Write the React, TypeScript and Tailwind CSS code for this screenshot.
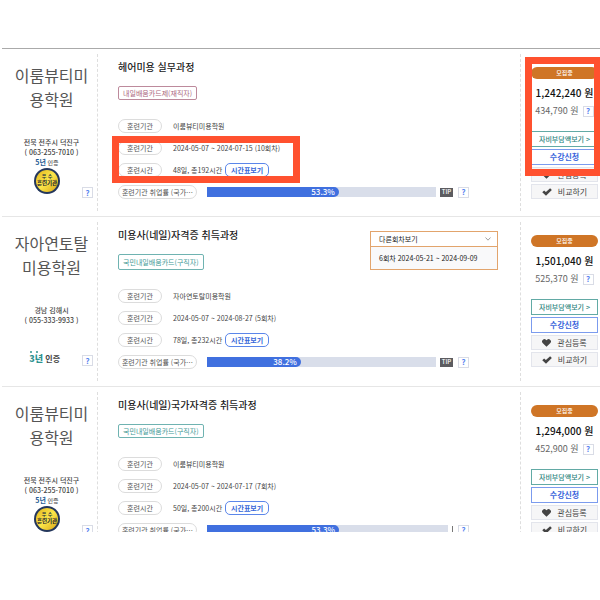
import React from "react";

type Course = {
  school: [string, string];
  region: string;
  phone: string;
  certYears: number;
  excellent: boolean;
  title: string;
  tag: string;
  tagClass: string;
  institute: string;
  period: string;
  hours: string;
  rate: string;
  fill: number;
  tip: boolean;
  price: string;
  selfPay: string;
  otherSession?: string;
  highlighted?: boolean;
};

const TEAL_TAG = "border-[#6fb3b1] text-[#3f9996]";

const courses: Course[] = [
  {
    school: ["이룸뷰티미", "용학원"],
    region: "전북 전주시 덕진구",
    phone: "( 063-255-7010 )",
    certYears: 5,
    excellent: true,
    title: "헤어미용 실무과정",
    tag: "내일배움카드제(재직자)",
    tagClass: "h-[14px] border-[#bd8a9c] text-[#ab6880]",
    institute: "이룸뷰티미용학원",
    period: "2024-05-07 ~ 2024-07-15 (10회차)",
    hours: "48일, 총192시간",
    rate: "53.3%",
    fill: 57.6,
    tip: true,
    price: "1,242,240 원",
    selfPay: "434,790 원",
    highlighted: true,
  },
  {
    school: ["자아연토탈", "미용학원"],
    region: "경남 김해시",
    phone: "( 055-333-9933 )",
    certYears: 3,
    excellent: false,
    title: "미용사(네일)자격증 취득과정",
    tag: "국민내일배움카드(구직자)",
    tagClass: `h-[16px] ${TEAL_TAG}`,
    institute: "자아연토탈미용학원",
    period: "2024-05-07 ~ 2024-08-27 (5회차)",
    hours: "78일, 총232시간",
    rate: "38.2%",
    fill: 41,
    tip: true,
    price: "1,501,040 원",
    selfPay: "525,370 원",
    otherSession: "6회차 2024-05-21 ~ 2024-09-09",
  },
  {
    school: ["이룸뷰티미", "용학원"],
    region: "전북 전주시 덕진구",
    phone: "( 063-255-7010 )",
    certYears: 5,
    excellent: true,
    title: "미용사(네일)국가자격증 취득과정",
    tag: "국민내일배움카드(구직자)",
    tagClass: `h-[14px] ${TEAL_TAG}`,
    institute: "이룸뷰티미용학원",
    period: "2024-05-07 ~ 2024-07-17 (7회차)",
    hours: "50일, 총200시간",
    rate: "53.3%",
    fill: 54.8,
    tip: false,
    price: "1,294,000 원",
    selfPay: "452,900 원",
  },
];

function Help() {
  return (
    <button
      type="button"
      aria-label="도움말"
      className="flex h-[11px] w-[11px] shrink-0 items-center justify-center border border-[#d9dce6] bg-white text-[8px] leading-none font-bold text-[#5b86f0]"
    >
      ?
    </button>
  );
}

function ExcellentSeal() {
  return (
    <svg viewBox="0 0 26 26" className="h-[26px] w-[26px]">
      <defs>
        <linearGradient id="gold" x1="0" y1="0" x2="1" y2="1">
          <stop offset="0" stopColor="#e3b51c" />
          <stop offset="0.5" stopColor="#fbe64a" />
          <stop offset="1" stopColor="#d9a514" />
        </linearGradient>
      </defs>
      <circle cx="13" cy="13" r="13" fill="#24375c" />
      <circle cx="13" cy="13" r="11" fill="url(#gold)" />
      <text x="13" y="10" textAnchor="middle" fontSize="5" fontWeight="700" fill="#24303f">우 수</text>
      <text x="13" y="17" textAnchor="middle" fontSize="5.5" fontWeight="700" fill="#16202e">훈련기관</text>
    </svg>
  );
}

function Cert({ years, excellent }: { years: number; excellent: boolean }) {
  if (excellent) {
    return (
      <div className="flex flex-col items-center pb-1">
        <p className="text-[6px] leading-[11px] font-medium text-[#555]">
          <b className="text-[7px] text-[#1f5c94]">{years}년</b> 인증
        </p>
        <ExcellentSeal />
      </div>
    );
  }
  return (
    <div className="flex flex-col items-start pb-px">
      <span className="ml-px flex gap-1">
        <i className="h-0.5 w-0.5 rounded-full bg-[#2f9390]" />
        <i className="h-0.5 w-0.5 rounded-full bg-[#2f9390]" />
      </span>
      <p className="text-[8px] leading-[12px] font-bold text-[#444]">
        <b className="text-[9px] text-[#2f9390]">{years}년</b> 인증
      </p>
    </div>
  );
}

function Pill({ children, wide }: { children: React.ReactNode; wide?: boolean }) {
  return (
    <span
      className={`flex h-[14px] shrink-0 items-center justify-center rounded-full border border-[#dcdcdc] text-[7px] leading-none whitespace-nowrap text-[#555] ${wide ? "w-[79px]" : "w-[44px]"}`}
    >
      {children}
    </span>
  );
}

function Info({ label, children }: { label: string; children: React.ReactNode }) {
  return (
    <div className="flex h-[14px] items-center">
      <dt>
        <Pill>{label}</Pill>
      </dt>
      <dd className="ml-[11px] flex items-center gap-[3px] text-[7px] leading-none whitespace-nowrap text-[#444]">
        {children}
      </dd>
    </div>
  );
}

function OtherSessions({ session }: { session: string }) {
  return (
    <div className="mt-1 mr-[22px] w-32 shrink-0 border border-[#e2a46c] text-[7px] leading-none text-[#222]">
      <button
        type="button"
        aria-expanded="true"
        className="flex h-[15px] w-full items-center justify-between border-b border-[#e2a46c] bg-white pr-1.5 pl-2"
      >
        다른회차보기
        <svg viewBox="0 0 6 4" className="h-1 w-1.5" fill="none" stroke="#888" strokeWidth="0.8">
          <path d="M0.5 0.5 3 3.2 5.5 0.5" />
        </svg>
      </button>
      <ul className="h-[22px] bg-[#f9f9fa]">
        <li className="flex h-full items-center pl-2">{session}</li>
      </ul>
    </div>
  );
}

function Heart() {
  return (
    <svg viewBox="0 0 20 18" className="h-2 w-[9px]" fill="#444">
      <path d="M10 17.5 1.8 9.6A5.2 5.2 0 0 1 1.6 2 5.4 5.4 0 0 1 9.2 2L10 2.9 10.8 2a5.4 5.4 0 0 1 7.6 0 5.2 5.2 0 0 1-.2 7.600Z" />
    </svg>
  );
}

function Check() {
  return (
    <svg viewBox="0 0 20 16" className="h-2 w-[10px]" fill="#444">
      <path d="M0.5 8.5 4.2 4.800l3.600 3.400L16.200 0.300l3.500 3.500L8 15.700Z" />
    </svg>
  );
}

const smallAction =
  "flex h-[15px] items-center justify-center gap-1.5 border border-[#e3e5ec] bg-[#f6f6f7] text-[8px] leading-none text-[#444]";

function CourseRow({ c }: { c: Course }) {
  return (
    <article className="relative flex border-b border-[#e6e6e6] py-[5px]">
      <section className="w-24 shrink-0 border-r border-dashed border-[#dedede] pl-1 text-center">
        <h3 className="pt-[9px] text-[16px] leading-6 text-[#555]">
          {c.school[0]}
          <br />
          {c.school[1]}
        </h3>
        <p className="mt-[26px] text-[7px] leading-[10px] font-medium text-[#444]">
          {c.region}
          <br />
          {c.phone}
        </p>
        <div className="flex h-[41px] items-end justify-end gap-[22px] pr-1">
          <Cert years={c.certYears} excellent={c.excellent} />
          <Help />
        </div>
      </section>

      <section className="min-w-0 flex-1 pt-[5px] pb-3 pl-5">
        <div className="flex items-start justify-between">
          <div>
            <h2 className="text-[10px] leading-4 font-medium whitespace-nowrap text-[#222]">{c.title}</h2>
            <span
              className={`mt-[11px] flex w-fit items-center rounded-[2px] border px-1 text-[7px] leading-none whitespace-nowrap ${c.tagClass}`}
            >
              {c.tag}
            </span>
          </div>
          {c.otherSession && <OtherSessions session={c.otherSession} />}
        </div>
        <dl className="mt-[19px] flex flex-col gap-2">
          <Info label="훈련기관">{c.institute}</Info>
          <Info label="훈련기간">{c.period}</Info>
          <Info label="훈련시간">
            {c.hours}
            <button
              type="button"
              className="h-[14px] w-11 rounded-[5px] border border-[#5b86ea] bg-white text-[7px] leading-none font-bold text-[#3566d8]"
            >
              시간표보기
            </button>
          </Info>
          <div className="flex h-[14px] items-center pr-[51px]">
            <dt>
              <Pill wide>훈련기관 취업률 (국가…</Pill>
            </dt>
            <dd className="ml-[10px] flex min-w-0 flex-1 items-center">
              <div className="h-[10px] flex-1 bg-[#d9deea]">
                <div
                  className="flex h-full items-center justify-end rounded-r-full bg-[#4070df] pr-1 text-[8px] leading-none font-medium text-white"
                  style={{ width: `${c.fill}%` }}
                >
                  {c.rate}
                </div>
              </div>
              {c.tip ? (
                <span className="mr-[5px] ml-1 flex h-[9px] w-[13px] items-center justify-center bg-[#5c5c60] text-[6px] leading-none font-medium text-white">
                  TIP
                </span>
              ) : (
                <span className="mr-[5px] ml-1 h-[9px] w-px bg-[#777]" />
              )}
              <Help />
            </dd>
          </div>
        </dl>
      </section>

      <section className="w-20 shrink-0 border-l border-dashed border-[#dedede] pt-[13px] pr-0.5 pl-[10px]">
        <p className="flex h-3 items-center justify-center rounded-full bg-[#cf7526] text-[6px] leading-none font-medium text-white">
          모집중
        </p>
        <p className="mt-1.5 text-center text-[10px] leading-4 font-medium whitespace-nowrap text-[#111]">{c.price}</p>
        <div className="mt-0.5 flex h-4 items-center justify-center gap-1 text-[9px] whitespace-nowrap text-[#666]">
          {c.selfPay}
          <Help />
        </div>
        <div className="mt-3 flex flex-col gap-0.5">
          <button
            type="button"
            className="h-4 border border-[#62aaa5] bg-white text-[7px] leading-none font-medium whitespace-nowrap text-[#2b8580]"
          >
            자비부담액보기 &gt;
          </button>
          <button
            type="button"
            className="h-4 border border-[#7b9bee] bg-white text-[8px] leading-none font-bold text-[#3b66dc]"
          >
            수강신청
          </button>
          <button type="button" className={smallAction}>
            <Heart />
            관심등록
          </button>
          <button type="button" className={smallAction}>
            <Check />
            비교하기
          </button>
        </div>
      </section>

      {c.highlighted && (
        <>
          <div className="pointer-events-none absolute top-[87px] left-[110px] h-[47px] w-[188px] border-[7px] border-[#ff512f]" />
          <div className="pointer-events-none absolute top-2 right-0 h-[119px] w-[75px] border-[7px] border-r-[6px] border-[#ff512f]" />
        </>
      )}
    </article>
  );
}

export default function App() {
  return (
    <div lang="ko" className="bg-white pt-12 font-['Noto_Sans_CJK_KR','Noto_Sans',sans-serif]">
      <main className="ml-0.5 max-h-[484px] overflow-hidden border-t border-[#aaa]">
        {courses.map((c) => (
          <CourseRow key={c.title} c={c} />
        ))}
      </main>
    </div>
  );
}
